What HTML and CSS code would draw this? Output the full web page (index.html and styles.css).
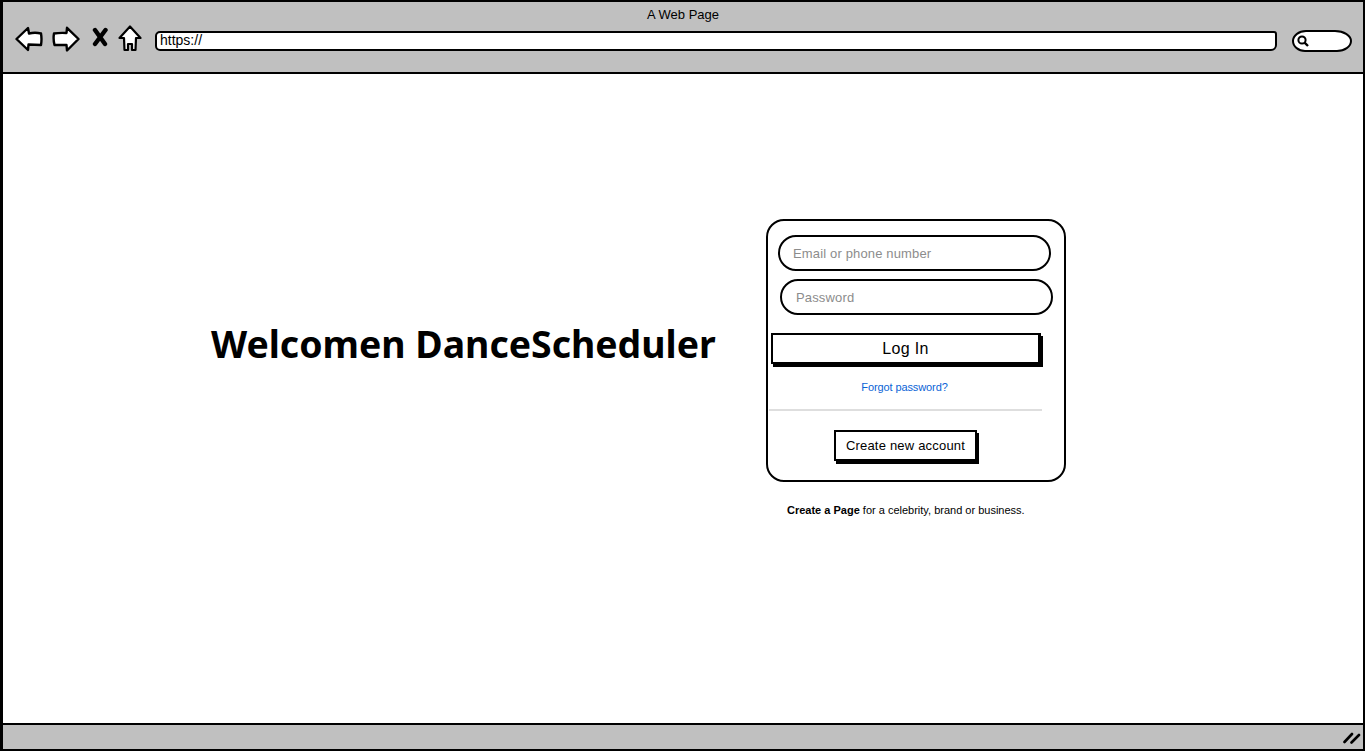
FILE: index.html
```html
<!DOCTYPE html>
<html lang="en">
<head>
    <meta charset="UTF-8">
    <meta name="viewport" content="width=device-width, initial-scale=1.0">
    <title>A Web Page</title>
    <link rel="stylesheet" href="styles.css">
</head>
<body>
    <div class="window">
        <header class="topbar">
            <div class="page_title">A Web Page</div>
            <div class="nav_row">
                <svg class="nav_icon icon_back" viewBox="0 0 28 26" width="28" height="26">
                    <path d="M1.5 13 L13 2 L14 7.5 Q20 6 26 7.5 Q27 13 26 19 L13.5 18.5 L13 24 Z" fill="#fff" stroke="#000" stroke-width="2.4" stroke-linejoin="round"/>
                </svg>
                <svg class="nav_icon icon_forward" viewBox="0 0 28 26" width="28" height="26">
                    <path d="M2 7.5 Q8 6.5 14.5 7 L15 1.8 L26.5 13 L15 24.5 L14.5 19 L2.5 19 Q1 13 2 7.5 Z" fill="#fff" stroke="#000" stroke-width="2.4" stroke-linejoin="round"/>
                </svg>
                <svg class="nav_icon icon_stop" viewBox="0 0 16 20" width="16" height="20">
                    <path d="M3 3 L13 17 M13.5 3 L3 17" fill="none" stroke="#000" stroke-width="4.4" stroke-linecap="round"/>
                </svg>
                <svg class="nav_icon icon_home" viewBox="0 0 24 28" width="24" height="28">
                    <path d="M12 1.5 L22.5 13 L18 13 L17.5 25 L14 25 L14 19 L10 19 L10 25 L6.5 25 L6 13 L1.5 13 Z" fill="#fff" stroke="#000" stroke-width="2.2" stroke-linejoin="round"/>
                </svg>
                <div class="url_bar">https://</div>
                <div class="search_box">
                    <svg viewBox="0 0 14 14" width="14" height="14">
                        <circle cx="6" cy="6" r="3.6" fill="none" stroke="#000" stroke-width="2"/>
                        <path d="M8.6 8.6 L12 12" stroke="#000" stroke-width="2.4"/>
                    </svg>
                </div>
            </div>
        </header>

        <main class="content">
            <h1 class="welcome">Welcomen DanceScheduler</h1>
            <div class="login_column">
                <form class="login_card">
                    <input class="pill_input" type="text" placeholder="Email or phone number">
                    <input class="pill_input second" type="password" placeholder="Password">
                    <button class="login_btn" type="button">Log In</button>
                    <a class="forgot_link" href="#">Forgot password?</a>
                    <hr class="divider">
                    <button class="create_btn" type="button">Create new account</button>
                </form>
                <p class="page_note"><b>Create a Page</b> for a celebrity, brand or business.</p>
            </div>
        </main>

        <footer class="statusbar">
            <svg viewBox="0 0 18 14" width="18" height="14">
                <path d="M1.5 12 L9 4 M8.5 12.5 L16 5" fill="none" stroke="#000" stroke-width="2.6" stroke-linecap="round"/>
            </svg>
        </footer>
    </div>
</body>
</html>
```

FILE: styles.css
```css
* {
    box-sizing: border-box;
}
body {
    margin: 0;
    font-family: "Liberation Sans", Arial, sans-serif;
    background: #fff;
    color: #000;
}
.window {
    display: flex;
    flex-direction: column;
    height: 751px;
    border: solid #000;
    border-width: 2px 2px 2px 3px;
    overflow: hidden;
}
.topbar {
    height: 72px;
    flex: none;
    background: #c0c0c0;
    border-bottom: 2px solid #000;
    padding-top: 5px;
}
.page_title {
    font-size: 13px;
    line-height: 15px;
    text-align: center;
}
.nav_row {
    display: flex;
    align-items: center;
    margin-top: 1px;
    padding-left: 12px;
    padding-right: 11px;
    height: 36px;
}
.nav_icon {
    flex: none;
    margin-bottom: 5px;
}
.icon_forward {
    margin-left: 9px;
}
.icon_stop {
    margin-left: 12px;
    margin-bottom: 8px;
}
.icon_home {
    margin-left: 10px;
}
.url_bar {
    flex: 1;
    height: 20px;
    margin-left: 13px;
    padding-left: 3px;
    background: #fff;
    border: 2px solid #000;
    border-radius: 5px 3px 6px 5px;
    font-size: 14px;
    line-height: 15px;
}
.search_box {
    flex: none;
    display: flex;
    align-items: center;
    width: 60px;
    height: 22px;
    margin-left: 15px;
    padding-left: 2px;
    background: #fff;
    border: 2px solid #000;
    border-radius: 14px 17px 15px 13px / 11px;
}
.content {
    flex: 1;
    display: flex;
    align-items: flex-start;
    padding-top: 145px;
    padding-left: 208px;
}
.welcome {
    margin: 100px 0 0;
    width: 555px;
    font-family: "Noto Sans", sans-serif;
    font-size: 37.4px;
    line-height: 50px;
    font-weight: 700;
    white-space: nowrap;
}
.login_column {
    width: 300px;
}
.login_card {
    display: flex;
    flex-direction: column;
    align-items: flex-start;
    height: 263px;
    padding: 14px 0 0 3px;
    border: 2px solid #000;
    border-radius: 18px;
}
.pill_input {
    width: 273px;
    height: 36px;
    margin-left: 7px;
    padding: 0 13px;
    border: 2px solid #000;
    border-radius: 18px;
    background: #fff;
    font-family: inherit;
    font-size: 13px;
    letter-spacing: 0.15px;
}
.pill_input::placeholder {
    color: #8c8c8c;
    opacity: 1;
}
.pill_input.second {
    margin-top: 8px;
    margin-left: 9px;
    padding: 0 14px;
}
.login_btn {
    width: 270px;
    height: 31px;
    margin-top: 18px;
    background: #fff;
    border: 2px solid #000;
    border-right-width: 3px;
    box-shadow: 2px 3px 0 #000;
    font-family: inherit;
    font-size: 16px;
    letter-spacing: 0.3px;
    color: #000;
}
.forgot_link {
    align-self: center;
    margin-top: 16px;
    margin-right: 26px;
    font-size: 11px;
    line-height: 14px;
    letter-spacing: -0.1px;
    color: #0a63d6;
    text-decoration: none;
}
.divider {
    width: 273px;
    margin: 15px 0 0 -2px;
    height: 2px;
    border: none;
    background: #dedede;
}
.create_btn {
    align-self: flex-start;
    width: 143px;
    height: 31px;
    margin-top: 19px;
    margin-left: 63px;
    background: #fff;
    border: 2px solid #000;
    box-shadow: 2px 3px 0 #000;
    font-family: inherit;
    font-size: 13px;
    letter-spacing: 0.2px;
    color: #000;
}
.page_note {
    margin: 21px 0 0 21px;
    font-size: 11px;
    line-height: 14px;
    white-space: nowrap;
}
.statusbar {
    flex: none;
    display: flex;
    align-items: center;
    justify-content: flex-end;
    height: 26px;
    padding-right: 2px;
    background: #c0c0c0;
    border-top: 2px solid #000;
}
```
